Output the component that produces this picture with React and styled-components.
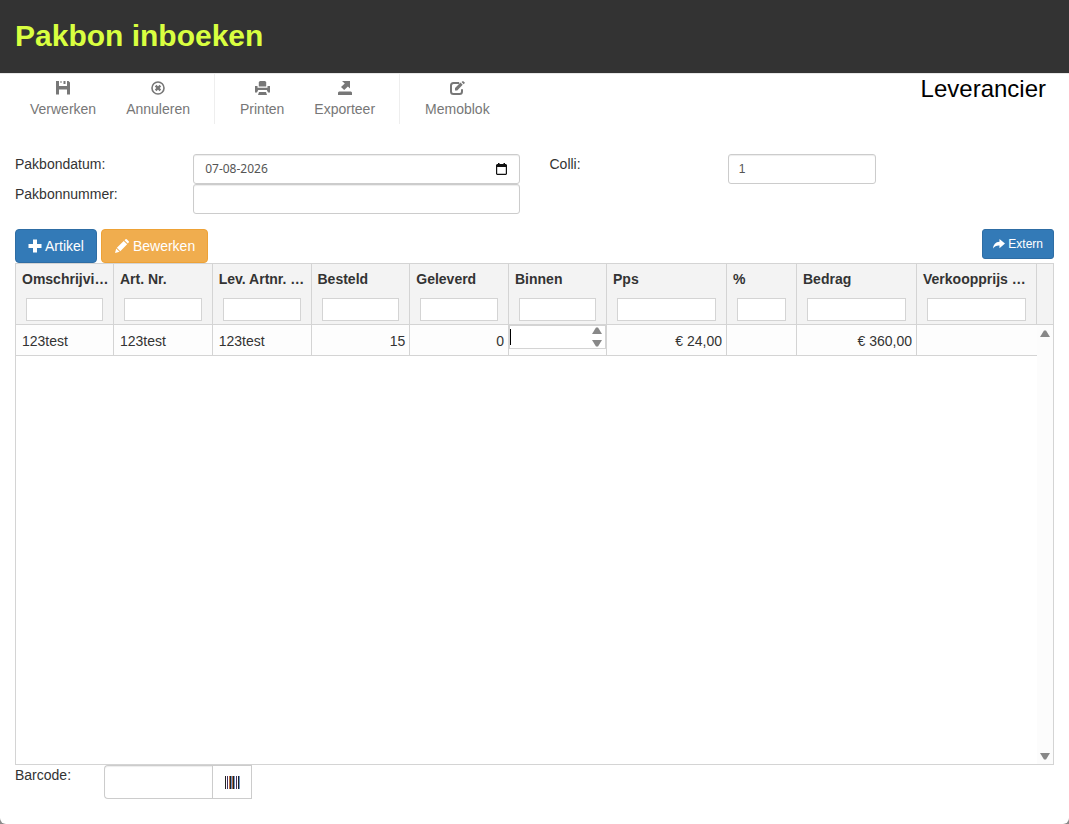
import styled, { createGlobalStyle } from 'styled-components';

const columns = [
  { key: 'omschrijving', title: 'Omschrijving', width: 98 },
  { key: 'artnr', title: 'Art. Nr.' },
  { key: 'levartnr', title: 'Lev. Artnr. Nr.' },
  { key: 'besteld', title: 'Besteld', right: true },
  { key: 'geleverd', title: 'Geleverd', right: true },
  { key: 'binnen', title: 'Binnen', width: 98, editing: true },
  { key: 'pps', title: 'Pps', width: 120, right: true },
  { key: 'procent', title: '%', width: 70, right: true },
  { key: 'bedrag', title: 'Bedrag', width: 120, right: true },
  { key: 'verkoopprijs', title: 'Verkoopprijs Excl.', width: 120, right: true },
];

const rows = [
  {
    omschrijving: '123test',
    artnr: '123test',
    levartnr: '123test',
    besteld: '15',
    geleverd: '0',
    pps: '€ 24,00',
    bedrag: '€ 360,00',
  },
];

const SaveIcon = () => (
  <Icon viewBox='0 0 14 14'>
    <path d='M0 0h3v5h8V0h1.500L14 1.500V13.500h-3V8.500H3v5H0zM7.500 0h2v3h-2zM4.500 0h1v2h-1z' />
  </Icon>
);

const CancelIcon = () => (
  <Icon viewBox='0 0 14 14'>
    <circle cx='7' cy='7' r='6' fill='none' stroke='currentColor' strokeWidth='1.600' />
    <path d='M4.600 4.600l4.800 4.800M9.400 4.600l-4.800 4.800' stroke='currentColor' strokeWidth='2.200' />
  </Icon>
);

const PrintIcon = () => (
  <Icon viewBox='0 0 15 14' $width={15}>
    <path d='M5 0h5l1.200 1v4.500H3.800V1zM0 5h2.500v1.700h10V5H15v6.500h-2L11.800 9H3.200L2 11.500H0zM4 11h7l1 3H3z' />
  </Icon>
);

const ExportIcon = () => (
  <Icon viewBox='0 0 14 14'>
    <path d='M4 0h8v7.500L9.900 5.400 6.200 9 3 6l3.800-3.400zM1 10.500h12l1 1V14H0v-2.500z' />
  </Icon>
);

const MemoIcon = () => (
  <Icon viewBox='0 0 15 14' $width={15}>
    <path
      d='M9.200 2H3.500Q1 2 1 4.500v6Q1 13 3.500 13h6q2.500 0 2.500-2.500V8.200'
      fill='none'
      stroke='currentColor'
      strokeWidth='2'
    />
    <path d='M5 9.500V7l5.500-5.500 2.200 2.200L7.200 9.500zM11.500 1L13 0l2 1.800-1.300 1.400z' />
  </Icon>
);

const PlusIcon = () => (
  <Icon viewBox='0 0 14 14'>
    <path d='M5 0.500h4V5h4.500v4H9v4.500H5V9H0.500V5H5z' />
  </Icon>
);

const PencilIcon = () => (
  <Icon viewBox='0 0 15 15' $width={16}>
    <path d='M0 15l1.300-4.800 3.600 3.500zM2 9.300l7.300-7.200 3.700 3.600-7.300 7.300zM10.200 1.300l1-1q.7-.6 1.400 0l2.100 2.100q.6.700 0 1.400l-1 1z' />
  </Icon>
);

const ShareIcon = () => (
  <Icon viewBox='0 0 13 11' $width={12}>
    <path d='M7 0l6 5-6 5V7.200Q2.500 6.800 0 10.500 .5 3.500 7 3z' />
  </Icon>
);

const CalendarIcon = () => (
  <Icon viewBox='0 0 11 12' $width={11} $height={12}>
    <path d='M2 0h1.500v1h4V0H9v1h1l1 1v9l-1 1H1l-1-1V2l1-1h1zM1.200 4v6.800h8.600V4z' fillRule='evenodd' />
  </Icon>
);

const BarcodeIcon = () => (
  <Icon viewBox='0 0 15 13' $width={15} $height={13}>
    <path d='M0 0h1v13H0zM5 0h1v13H5zM8 0h1v13H8zM13 0h1v13h-1z' fill='#222' />
    <path d='M2 0h1v13H2zM11 0h1v13h-1z' fill='#45315f' />
    <path d='M4 0h1v13H4zM7 0h1v13H7z' fill='#b9744c' />
    <path d='M6 0h1v13H6zM9 0h1v13H9zM14 0h1v13h-1z' fill='#7197c9' />
  </Icon>
);

const Arrow = ({ down }) => (
  <ArrowSvg viewBox='0 0 10 7' aria-hidden='true'>
    <path d={down ? 'M0 0h10L6 6.500H4z' : 'M4 .500h2L10 7H0z'} />
  </ArrowSvg>
);

const App = () => {
  return (
    <>
      <GlobalStyle />
      <Page>
        <Header>
          <h1>Pakbon inboeken</h1>
        </Header>

        <TopBar>
          <Toolbar>
            <ToolGroup>
              <ToolButton type='button'><SaveIcon />Verwerken</ToolButton>
              <ToolButton type='button'><CancelIcon />Annuleren</ToolButton>
            </ToolGroup>
            <ToolGroup>
              <ToolButton type='button'><PrintIcon />Printen</ToolButton>
              <ToolButton type='button'><ExportIcon />Exporteer</ToolButton>
            </ToolGroup>
            <ToolGroup>
              <ToolButton type='button'><MemoIcon />Memoblok</ToolButton>
            </ToolGroup>
          </Toolbar>
          <Supplier>Leverancier</Supplier>
        </TopBar>

        <Form>
          <Label htmlFor='datum'>Pakbondatum:</Label>
          <Field>
            <DateBox>
              <input id='datum' type='text' defaultValue='07-08-2026' />
              <button type='button' aria-label='Kalender'><CalendarIcon /></button>
            </DateBox>
          </Field>
          <Label htmlFor='colli'>Colli:</Label>
          <Field>
            <TextInput id='colli' type='text' defaultValue='1' />
          </Field>
          <span />
          <Label htmlFor='nummer'>Pakbonnummer:</Label>
          <Field>
            <TextInput id='nummer' type='text' />
          </Field>
        </Form>

        <Actions>
          <Button type='button'><PlusIcon />Artikel</Button>
          <Button type='button' $variant='warning'><PencilIcon />Bewerken</Button>
          <SmallButton type='button'><ShareIcon />Extern</SmallButton>
        </Actions>

        <GridBox>
          <GridMain>
            <Table>
              <colgroup>
                {columns.map((c) => (
                  <Col key={c.key} $width={c.width} />
                ))}
              </colgroup>
              <thead>
                <tr>
                  {columns.map((c) => (
                    <HeadCell key={c.key} scope='col'>
                      <HeadTitle>{c.title}</HeadTitle>
                      <FilterInput type='text' aria-label={`Filter ${c.title}`} />
                    </HeadCell>
                  ))}
                </tr>
              </thead>
              <tbody>
                {rows.map((row, i) => (
                  <tr key={i}>
                    {columns.map((c) =>
                      c.editing ? (
                        <EditCell key={c.key}>
                          <Spinner>
                            <input type='text' aria-label={c.title} />
                            <Caret />
                            <SpinButtons>
                              <button type='button' aria-label='Omhoog'><Arrow /></button>
                              <button type='button' aria-label='Omlaag'><Arrow down /></button>
                            </SpinButtons>
                          </Spinner>
                        </EditCell>
                      ) : (
                        <Cell key={c.key} $right={c.right}>{row[c.key]}</Cell>
                      )
                    )}
                  </tr>
                ))}
              </tbody>
            </Table>
          </GridMain>
          <Gutter>
            <GutterHead />
            <ScrollTrack>
              <Arrow />
              <Arrow down />
            </ScrollTrack>
          </Gutter>
        </GridBox>

        <Footer>
          <Label htmlFor='barcode'>Barcode:</Label>
          <BarcodeGroup>
            <input id='barcode' type='text' />
            <button type='button' aria-label='Barcode scannen'><BarcodeIcon /></button>
          </BarcodeGroup>
        </Footer>
      </Page>
    </>
  );
};

const GlobalStyle = createGlobalStyle`
  * {
    box-sizing: border-box;
  }
  body {
    margin: 0;
    background: #8a8a8a;
    color: #333;
    font-family: "Liberation Sans", Arial, sans-serif;
    font-size: 14px;
    line-height: 20px;
  }
  input, button {
    font: inherit;
    color: inherit;
    margin: 0;
  }
`;

const Page = styled.main`
  display: flex;
  flex-direction: column;
  min-height: 100vh;
  padding-bottom: 25px;
  background: #fff;
  border-radius: 0 0 6px 6px;
`;

const Header = styled.header`
  padding: 15px 15px 16px;
  background: #333;
  h1 {
    margin: 0;
    color: #d9ff40;
    font-size: 30px;
    line-height: 42px;
  }
`;

const TopBar = styled.div`
  display: flex;
  justify-content: space-between;
  padding: 0 23px 0 5px;
  margin-bottom: 30px;
  border-top: 1px solid #e7e7e7;
`;

const Toolbar = styled.nav`
  display: flex;
`;

const ToolGroup = styled.div`
  display: flex;
  padding: 0 9px 0 10px;
  & + & {
    border-left: 1px solid #eee;
  }
`;

const ToolButton = styled.button`
  display: flex;
  flex-direction: column;
  align-items: center;
  gap: 4px;
  height: 50px;
  padding: 7px 15px 5px;
  border: 0;
  background: none;
  color: #777;
`;

const Icon = styled.svg`
  flex: none;
  width: ${(p) => p.$width || 14}px;
  height: ${(p) => p.$height || 14}px;
  fill: currentColor;
`;

const ArrowSvg = styled.svg`
  display: block;
  width: 10px;
  height: 7px;
  fill: #888;
`;

const Supplier = styled.div`
  color: #000;
  font-size: 24px;
  line-height: 30px;
`;

const Form = styled.div`
  display: grid;
  grid-template-columns: 2fr 4fr 2fr 2fr 2fr;
  grid-auto-rows: 30px;
`;

const Label = styled.label`
  padding: 0 15px;
`;

const Field = styled.div`
  min-width: 0;
  padding: 0 15px;
`;

const TextInput = styled.input`
  width: 100%;
  height: 30px;
  padding: 5px 10px;
  border: 1px solid #ccc;
  border-radius: 3px;
  background: #fff;
  box-shadow: inset 0 1px 1px rgba(0, 0, 0, 0.075);
  color: #555;
  font-size: 12px;
  outline: 0;
`;

const DateBox = styled.div`
  display: flex;
  align-items: center;
  height: 30px;
  padding: 0 12px 0 11px;
  border: 1px solid #ccc;
  border-radius: 3px;
  box-shadow: inset 0 1px 1px rgba(0, 0, 0, 0.075);
  input {
    flex: 1;
    min-width: 0;
    padding: 0;
    border: 0;
    background: none;
    color: #555;
    font-family: "Noto Sans", sans-serif;
    font-size: 12px;
    outline: 0;
  }
  button {
    display: flex;
    padding: 0;
    border: 0;
    background: none;
    color: #111;
  }
`;

const Actions = styled.div`
  display: flex;
  align-items: flex-start;
  gap: 4px;
  padding: 15px 15px 0;
`;

const Button = styled.button`
  display: flex;
  align-items: center;
  gap: 3px;
  height: 34px;
  padding: 0 12px;
  border: 1px solid ${(p) => (p.$variant === 'warning' ? '#eea236' : '#2e6da4')};
  border-radius: 4px;
  background: ${(p) => (p.$variant === 'warning' ? '#f0ad4e' : '#337ab7')};
  color: #fff;
`;

const SmallButton = styled(Button)`
  height: 30px;
  padding: 0 10px;
  margin-left: auto;
  border-radius: 3px;
  font-size: 12px;
`;

const GridBox = styled.section`
  display: flex;
  flex: 1;
  margin: 0 15px;
  border: 1px solid #d4d4d4;
`;

const GridMain = styled.div`
  flex: 1;
  min-width: 0;
`;

const Table = styled.table`
  width: 100%;
  table-layout: fixed;
  border-collapse: separate;
  border-spacing: 0;
`;

const Col = styled.col`
  width: ${(p) => (p.$width ? `${p.$width}px` : 'auto')};
`;

const HeadCell = styled.th`
  height: 61px;
  padding: 5px 0 3px;
  border-right: 1px solid #d4d4d4;
  border-bottom: 1px solid #d4d4d4;
  background: #f3f3f3;
  text-align: left;
`;

const HeadTitle = styled.div`
  padding: 0 4px 0 6px;
  margin-bottom: 9px;
  overflow: hidden;
  text-overflow: ellipsis;
  white-space: nowrap;
`;

const FilterInput = styled.input`
  display: block;
  width: calc(100% - 20px);
  height: 23px;
  margin: 0 10px;
  padding: 0 4px;
  border: 1px solid #d4d4d4;
  background: #fff;
  font-weight: 400;
`;

const Cell = styled.td`
  height: 31px;
  padding: 2px 4px 0 6px;
  border-right: 1px solid #d4d4d4;
  border-bottom: 1px solid #d4d4d4;
  background: #fdfdfd;
  text-align: ${(p) => (p.$right ? 'right' : 'left')};
  &:last-child {
    border-right: 0;
  }
`;

const EditCell = styled(Cell)`
  padding: 0;
  vertical-align: top;
`;

const Spinner = styled.div`
  display: flex;
  align-items: center;
  position: relative;
  height: 24px;
  border: 1px solid #d4d4d4;
  background: #fff;
  input {
    flex: 1;
    min-width: 0;
    height: 20px;
    padding: 0 2px;
    border: 0;
    background: none;
    outline: 0;
  }
`;

/* text cursor of the cell being edited */
const Caret = styled.span`
  position: absolute;
  left: 0;
  top: 3px;
  width: 1px;
  height: 16px;
  background: #000;
`;

const SpinButtons = styled.div`
  display: flex;
  flex-direction: column;
  justify-content: space-between;
  height: 20px;
  padding-right: 3px;
  button {
    padding: 0;
    border: 0;
    background: none;
  }
`;

const Gutter = styled.div`
  display: flex;
  flex-direction: column;
  width: 16px;
`;

const GutterHead = styled.div`
  height: 61px;
  border-bottom: 1px solid #d4d4d4;
  background: #f3f3f3;
`;

const ScrollTrack = styled.div`
  display: flex;
  flex: 1;
  flex-direction: column;
  align-items: center;
  justify-content: space-between;
  padding: 5px 0 4px;
  background: #fcfcfc;
`;

const Footer = styled.footer`
  display: grid;
  grid-template-columns: 1fr 2fr 9fr;
`;

const BarcodeGroup = styled.div`
  display: flex;
  min-width: 0;
  padding: 0 15px;
  input {
    flex: 1;
    width: 0;
    min-width: 0;
    height: 34px;
    padding: 6px 12px;
    border: 1px solid #ccc;
    border-right: 0;
    border-radius: 4px 0 0 4px;
    box-shadow: inset 0 1px 1px rgba(0, 0, 0, 0.075);
    outline: 0;
  }
  button {
    display: flex;
    flex: none;
    align-items: center;
    justify-content: center;
    width: 40px;
    height: 34px;
    padding: 0;
    border: 1px solid #ccc;
    background: #fff;
  }
`;

export default App;
